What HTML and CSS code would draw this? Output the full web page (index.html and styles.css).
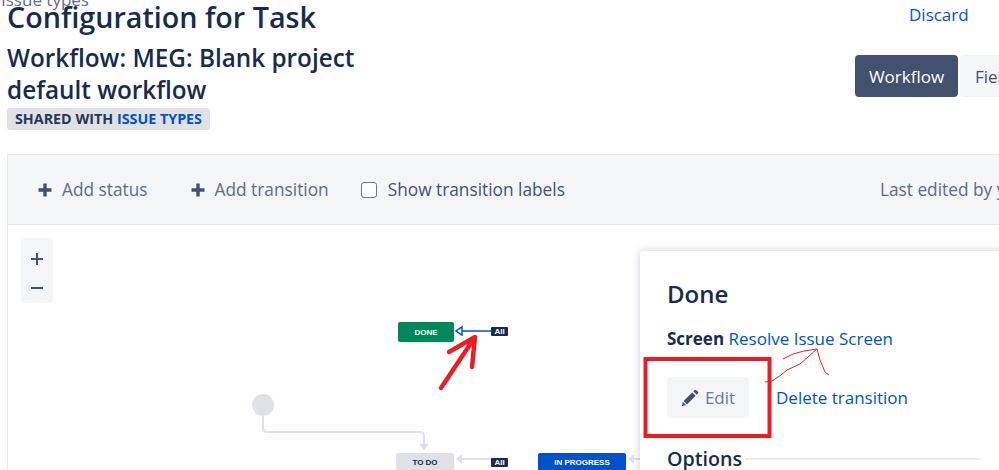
FILE: index.html
```html
<!DOCTYPE html>
<html lang="en">
<head>
<meta charset="utf-8">
<title>Configuration for Task</title>
<link rel="stylesheet" href="styles.css">
</head>
<body>
<div class="page">
  <div class="crumb"><a class="crumb-link">Issue types</a></div>
  <header class="header">
    <div class="titles">
      <h1 class="title">Configuration for Task</h1>
      <h2 class="subtitle">Workflow: MEG: Blank project<br>default workflow</h2>
      <span class="lozenge">SHARED WITH <a class="lozenge-link">ISSUE TYPES</a></span>
    </div>
    <div class="actions">
      <a class="discard">Discard</a>
      <div class="toggle">
        <button class="toggle-btn is-active">Workflow</button>
        <button class="toggle-btn">Fields</button>
      </div>
    </div>
  </header>
  <section class="designer">
    <div class="toolbar">
      <span class="tool">
        <svg class="plus" viewBox="0 0 16 16"><path d="M6.300 1.500h3.400v4.800h4.800v3.400H9.700v4.800H6.300V9.700H1.500V6.300h4.800z"/></svg>Add status
      </span>
      <span class="tool">
        <svg class="plus" viewBox="0 0 16 16"><path d="M6.300 1.500h3.400v4.800h4.800v3.400H9.700v4.800H6.300V9.700H1.500V6.300h4.800z"/></svg>Add transition
      </span>
      <label class="check"><span class="box"></span>Show transition labels</label>
      <span class="edited">Last edited by you</span>
    </div>
    <div class="canvas">
      <div class="zoom">
        <span class="zoom-btn"><svg class="zoom-icon" viewBox="0 0 12 12"><path d="M5 0h2v5h5v2H7v5H5V7H0V5h5z"/></svg></span>
        <span class="zoom-btn"><svg class="zoom-icon" viewBox="0 0 12 12"><path d="M0 5h12v2H0z"/></svg></span>
      </div>
      <svg class="edges" viewBox="0 0 999 245" width="999" height="245">
        <path class="edge" d="M263 191V203Q263 207 267 207H420Q424 207 424 211V220"/>
        <path class="head" d="M419 219h10l-5 6z"/>
        <path class="edge" d="M462 234H491"/>
        <path class="head" d="M462 229v10l-6-5z"/>
        <path class="edge" d="M634 234H640"/>
        <path class="head" d="M634 229v10l-6-5z"/>
        <path class="edge-blue" d="M461 106H491"/>
        <path class="head-blue" d="M462 102v8l-6-4z"/>
        <circle class="start" cx="263" cy="180" r="11"/>
      </svg>
      <span class="node node-done">DONE</span>
      <span class="tag tag-done">All</span>
      <span class="node node-todo">TO DO</span>
      <span class="tag tag-todo">All</span>
      <span class="node node-progress">IN PROGRESS</span>
      <aside class="panel">
        <h3 class="panel-title">Done</h3>
        <p class="screen"><b>Screen</b> <a class="link">Resolve Issue Screen</a></p>
        <div class="panel-actions">
          <button class="edit">
            <svg class="pencil" viewBox="0 0 18 18"><path d="M13.400 1.200a1.400 1.400 0 0 1 2 0l1.400 1.400a1.400 1.400 0 0 1 0 2L15.700 5.700 12.300 2.300zM11.200 3.400l3.400 3.400L6 15.400 2.600 12zM1.900 13l3.100 3.100-4.200 1.100z"/></svg>Edit
          </button>
          <a class="link delete">Delete transition</a>
        </div>
        <div class="section"><span class="section-name">Options</span><span class="rule"></span></div>
      </aside>
    </div>
  </section>
  <svg class="marks" viewBox="0 0 999 470" width="999" height="470">
    <path class="mark-heavy" d="M441 388L475 337M449 352L475 337M472 367L475 337"/>
    <rect class="mark-box" x="645.500" y="359" width="124" height="77"/>
    <path class="mark-thin" d="M765 382L772 381L781 375L787 370L800 364L817 349M783 359L793 354L804 351L817 349L820 360L825 372L829 375"/>
  </svg>
</div>
</body>
</html>
```

FILE: styles.css
```css
* { box-sizing: border-box; }
html, body { margin: 0; height: 470px; overflow: hidden; background: #fff; }
body { font-family: "Open Sans", "Noto Sans", "Liberation Sans", sans-serif; color: #172b4d; }
.page { position: relative; width: 999px; height: 470px; overflow: hidden; padding-left: 7px; }
a { text-decoration: none; }

.crumb { height: 3px; margin-left: -6px; font-size: 17px; line-height: 3px; color: #5e6c84; overflow: visible; }
.crumb-link { position: relative; top: -2px; }

.header { display: flex; height: 151px; }
.titles { flex: 0 0 848px; }
.title { margin: -2px 0 0; font-size: 28.700px; font-weight: 600; line-height: 32px; }
.subtitle { margin: 9px 0 0; font-size: 24.300px; font-weight: 600; line-height: 32px; }
.lozenge { display: inline-block; height: 22px; margin-top: 2px; padding: 0 8px; background: #dfe1e6; border-radius: 3px; font-size: 14.300px; font-weight: 700; line-height: 22px; color: #253858; }
.lozenge-link { color: #0052cc; }

.actions { flex: 0 0 auto; width: 200px; display: flex; flex-direction: column; }
.discard { margin: 0 0 0 54px; height: 52px; font-size: 17px; line-height: 24px; color: #0052cc; }
.toggle { display: flex; gap: 2px; }
.toggle-btn { flex: 0 0 auto; height: 42px; padding: 0 15px; border: 0; border-radius: 4px; background: #f4f5f7; font: inherit; font-size: 17px; color: #42526e; }
.toggle-btn.is-active { width: 103px; padding: 0; background: #42526e; color: #fff; }

.designer { width: 1200px; height: 316px; border-left: 1px solid #e6e7ea; border-top: 1px solid #e6e7ea; }
.toolbar { display: flex; align-items: center; height: 70px; padding-left: 30px; background: #f4f5f7; border-bottom: 1px solid #e6e7ea; font-size: 17.300px; color: #5e6c84; white-space: nowrap; }
.tool { display: flex; align-items: center; }
.tool + .tool { margin-left: 43px; }
.plus { width: 16px; height: 16px; margin-right: 9px; margin-left: -1px; fill: #42526e; }
.check { display: flex; align-items: center; margin-left: 32px; color: #42526e; }
.box { width: 16px; height: 16px; margin-right: 11px; background: #fff; border: 1px solid #767676; border-radius: 3px; }
.edited { margin-left: 315px; }

.canvas { position: relative; height: 245px; }
.edges { position: absolute; left: -8px; top: 0; }
.edge { fill: none; stroke: #dfe1e6; stroke-width: 2; }
.head { fill: #dfe1e6; }
.edge-blue { fill: none; stroke: #0052cc; stroke-width: 1.500; }
.head-blue { fill: #fff; stroke: #0052cc; stroke-width: 1.500; }
.start { fill: #dfe1e6; }

.zoom { position: absolute; left: 13px; top: 13px; display: flex; flex-direction: column; align-items: center; padding-top: 6px; width: 32px; height: 65px; background: #f4f5f7; border-radius: 4px; }
.zoom-btn { display: flex; align-items: center; height: 29px; }
.zoom-icon { width: 12px; height: 12px; fill: #42526e; }

.node { position: absolute; display: flex; align-items: center; justify-content: center; height: 20px; border-radius: 2px; font-family: "Liberation Sans", sans-serif; font-size: 8px; font-weight: 700; }
.node-done { left: 390px; top: 97px; width: 56px; background: #00875a; color: #fff; }
.node-todo { left: 388px; top: 228px; width: 58px; height: 18px; background: #dfe1e6; color: #172b4d; }
.node-progress { left: 530px; top: 228px; width: 88px; height: 18px; background: #0052cc; color: #fff; }
.tag { position: absolute; display: flex; align-items: center; justify-content: center; width: 17px; height: 9px; border-radius: 1px; background: #172b4d; color: #fff; font-family: "Liberation Sans", sans-serif; font-size: 8px; font-weight: 700; }
.tag-done { left: 483px; top: 102px; }
.tag-todo { left: 483px; top: 233px; }

.panel { position: absolute; left: 632px; top: 26px; width: 368px; height: 260px; padding: 27px 27px; background: #fff; border-radius: 4px; box-shadow: 0 0 8px rgba(9, 30, 66, .22); }
.panel-title { margin: 0; font-size: 24px; font-weight: 600; line-height: 32px; }
.screen { margin: 17px 0 0; font-size: 17px; line-height: 24px; }
.link { color: #0052cc; }
.panel-actions { display: flex; align-items: center; margin-top: 26px; }
.edit { display: flex; align-items: center; justify-content: center; width: 82px; height: 41px; padding: 0; border: 0; border-radius: 4px; background: #f4f5f7; font: inherit; font-size: 17px; color: #6b778c; }
.pencil { width: 18px; height: 18px; margin-right: 6px; fill: #42526e; }
.delete { margin-left: 27px; font-size: 17px; }
.section { display: flex; align-items: center; margin-top: 27px; }
.section-name { font-size: 19.700px; font-weight: 600; line-height: 28px; }
.rule { flex: 1; height: 2px; margin-left: 3px; background: #ebecf0; }

.marks { position: absolute; left: 0; top: 0; pointer-events: none; }
.mark-heavy { fill: none; stroke: #ed1c24; stroke-width: 4.500; stroke-linecap: round; stroke-linejoin: round; }
.mark-box { fill: none; stroke: #ed1c24; stroke-width: 4; }
.mark-thin { fill: none; stroke: #ed1c24; stroke-width: 1; }
```
